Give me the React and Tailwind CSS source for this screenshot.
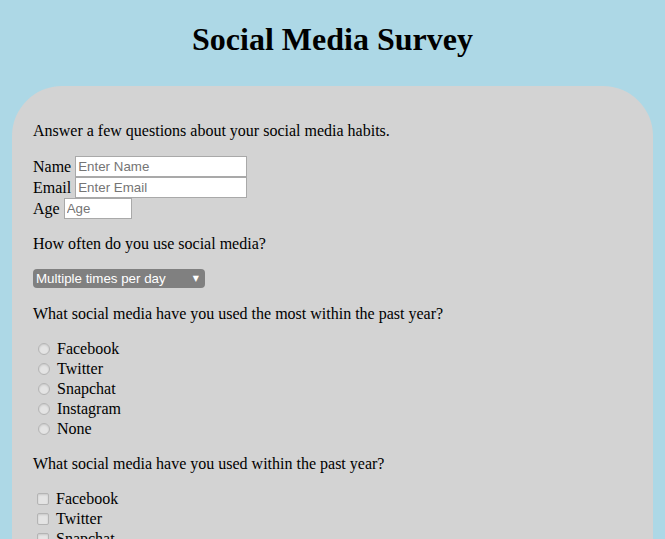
import React from 'react';

const serif = { fontFamily: '"Liberation Serif", "Times New Roman", serif' };

const Radio = ({ label }) => (
  <label className="flex items-center h-[20px]">
    <span className="ml-[5px] mr-[7px] w-[12px] h-[12px] rounded-full border border-[#b4b4b4] bg-[#e4e4e4] shadow-[inset_0_1px_2px_rgba(0,0,0,0.12)]" />
    <span>{label}</span>
  </label>
);

const Check = ({ label }) => (
  <label className="flex items-center h-[20px]">
    <span className="ml-[4px] mr-[7px] w-[12px] h-[12px] rounded-[2px] border border-[#b4b4b4] bg-[#e4e4e4] shadow-[inset_0_1px_2px_rgba(0,0,0,0.12)]" />
    <span>{label}</span>
  </label>
);

const Field = ({ label, placeholder, width }) => (
  <div className="flex items-center h-[21px]">
    <span className="mr-[4px]">{label}</span>
    <input
      type="text"
      placeholder={placeholder}
      className={`h-[21px] border border-[#a9a9a9] bg-white px-[2px] text-[13.33px] placeholder-[#757575] outline-none ${width}`}
      style={{ fontFamily: '"Liberation Sans", Arial, sans-serif' }}
    />
  </div>
);

const options = ['Facebook', 'Twitter', 'Snapchat', 'Instagram', 'None'];

export default function App() {
  return (
    <div className="min-h-[539px] bg-[#add8e6] text-black text-[16px] pb-4" style={serif}>
      <h1 className="pt-[21px] text-center text-[32px] font-bold leading-[37px]">Social Media Survey</h1>
      <form className="mx-3 mt-[28px] rounded-[50px] bg-[#d3d3d3] px-[21px] py-[20px]">
        <p className="mt-[16px] leading-[18px]">Answer a few questions about your social media habits.</p>

        <div className="mt-[16px]">
          <Field label="Name" placeholder="Enter Name" width="w-[172px]" />
          <Field label="Email" placeholder="Enter Email" width="w-[172px]" />
          <Field label="Age" placeholder="Age" width="w-[68px]" />
        </div>

        <p className="mt-[16px] leading-[18px]">How often do you use social media?</p>

        <div className="relative mt-[16px] w-[172px] h-[19px]">
          <select
            className="block appearance-none w-[172px] h-[19px] rounded-[4px] bg-[#808080] text-white text-[13.33px] pl-[3px] leading-[19px] outline-none"
            style={{ fontFamily: '"Liberation Sans", Arial, sans-serif' }}
            defaultValue="multi"
          >
            <option value="multi">Multiple times per day</option>
            <option value="daily">Once a day</option>
            <option value="weekly">A few times a week</option>
            <option value="never">Never</option>
          </select>
          <span
            className="pointer-events-none absolute right-[6px] top-[4px] text-[8px] leading-[12px] text-white"
            style={{ fontFamily: '"DejaVu Sans", sans-serif' }}
          >
            ▼
          </span>
        </div>

        <p className="mt-[17px] leading-[18px]">What social media have you used the most within the past year?</p>
        <div className="mt-[16px]">
          {options.map((o) => (
            <Radio key={o} label={o} />
          ))}
        </div>

        <p className="mt-[16px] leading-[18px]">What social media have you used within the past year?</p>
        <div className="mt-[16px]">
          {options.map((o) => (
            <Check key={o} label={o} />
          ))}
        </div>
      </form>
    </div>
  );
}
